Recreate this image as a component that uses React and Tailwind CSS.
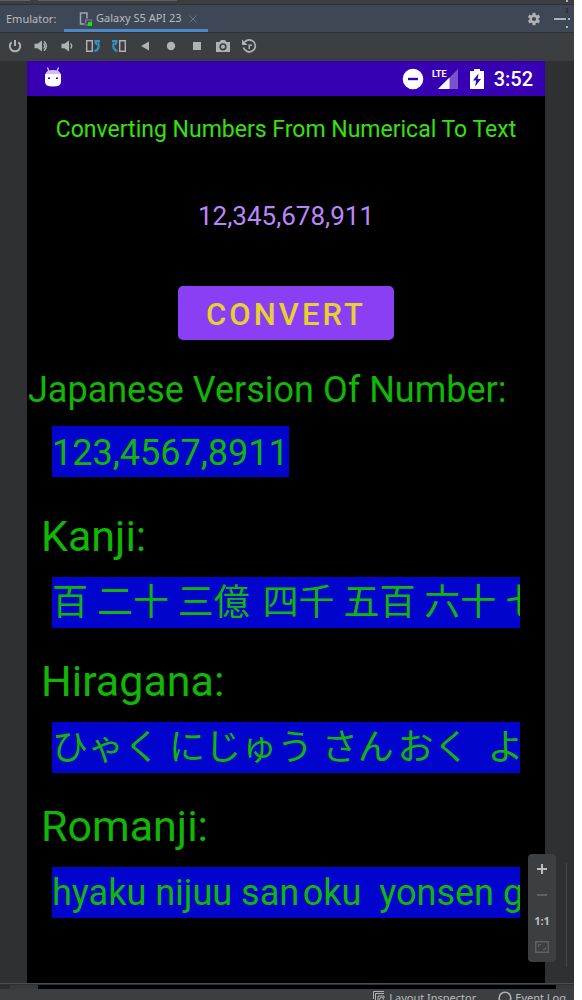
import React from "react";

const ROBOTO = "font-['Roboto','Noto_Sans_CJK_JP',sans-serif]";

function ToolButton({ label, children }) {
  return (
    <button type="button" aria-label={label} className="flex h-[26px] w-[26px] items-center justify-center text-[#afb1b3]">
      <svg width="16" height="16" viewBox="0 0 16 16" fill="currentColor" aria-hidden="true">
        {children}
      </svg>
    </button>
  );
}

function TabBar() {
  return (
    <header className="flex h-[27px] items-stretch bg-[#3d4756] font-['Noto_Sans','Open_Sans',sans-serif] text-[11px] text-[#bbbbbb]">
      <span className="flex w-16 items-center pt-px pl-[6px]">Emulator:</span>
      <div className="flex w-36 items-center border-b-[3px] border-[#4a88c7] pl-[15px] pt-[3px]">
        <svg width="14" height="16" viewBox="0 0 14 16" className="mr-[3px] shrink-0" aria-hidden="true">
          <path d="M5.500 13H1.500V2h6.500V7.500" fill="none" stroke="#9aa7b0" strokeWidth="1.500" />
          <path d="M6.700 12.500V9h5.600v2M6 14h3" fill="none" stroke="#9a6fc0" strokeWidth="1.200" />
          <rect x="9" y="11" width="4" height="4" fill="#00f000" />
        </svg>
        <span className="whitespace-nowrap">Galaxy S5 API 23</span>
        <button type="button" aria-label="Close tab" className="ml-[7px] shrink-0">
          <svg width="8" height="8" viewBox="0 0 8 8" stroke="#687380" aria-hidden="true">
            <path d="M.5.5l7 7M7.5.5l-7 7" />
          </svg>
        </button>
      </div>
      <div className="ml-auto flex items-center pr-1">
        <button type="button" aria-label="Settings" className="mr-[13px]">
          <svg width="14" height="14" viewBox="0 0 14 14" aria-hidden="true">
            <g fill="#afb1b3">
              <circle cx="7" cy="7" r="4.6" />
              <rect x="5.5" y=".8" width="3" height="12.4" />
              <rect x="5.5" y=".8" width="3" height="12.4" transform="rotate(60 7 7)" />
              <rect x="5.5" y=".8" width="3" height="12.4" transform="rotate(120 7 7)" />
            </g>
            <circle cx="7" cy="7" r="2.1" fill="#3d4756" />
          </svg>
        </button>
        <button type="button" aria-label="Hide panel">
          <svg width="16" height="22" viewBox="0 0 16 22" fill="#afb1b3" aria-hidden="true">
            <path d="M0 10h12v2H0zM14 10h2v2h-2zM12 18h2v2h-2z" />
            <path d="M12 0h2v5h-2z" fill="#313335" />
          </svg>
        </button>
      </div>
    </header>
  );
}

function EmulatorToolbar() {
  return (
    <div role="toolbar" aria-label="Emulator controls" className="flex h-[29px] items-start border-t border-[#2f3133] bg-[#3c3f41] pl-[2px]">
      <ToolButton label="Power">
        <path d="M4.6 4.2A5.2 5.2 0 1 0 11.4 4.2" fill="none" stroke="currentColor" strokeWidth="2" />
        <path d="M7 2h2v6H7z" />
      </ToolButton>
      <ToolButton label="Volume up">
        <path d="M1.500 5.800h3L9 2.500v11L4.500 10.200h-3z" />
        <path d="M10.500 5.500q2.400 2.500 0 5M11 3.200q5 4.800 0 9.600" fill="none" stroke="currentColor" strokeWidth="1.400" />
      </ToolButton>
      <ToolButton label="Volume down">
        <path d="M2.500 5.800h3L10 2.500v11L5.500 10.200h-3z" />
        <path d="M11.500 5.500q2.400 2.500 0 5" fill="none" stroke="currentColor" strokeWidth="1.400" />
      </ToolButton>
      <ToolButton label="Rotate left">
        <path d="M1.700 2.700h5.600v10.600H1.700z" fill="none" stroke="currentColor" strokeWidth="1.400" />
        <path d="M9.500 13.200c4.500-1.500 5-5 3.500-8.500" fill="none" stroke="#3592c4" strokeWidth="2.200" />
        <path d="M9.500 2h5.500v2.200H12V8L9.500 5z" fill="#3592c4" />
      </ToolButton>
      <ToolButton label="Rotate right">
        <path d="M8.700 2.700h5.600v10.600H8.700z" fill="none" stroke="currentColor" strokeWidth="1.400" />
        <path d="M6.500 13.200c-4.500-1.500-5-5-3.500-8.500" fill="none" stroke="#3592c4" strokeWidth="2.200" />
        <path d="M6.500 2H1v2.200h3V8l2.500-3z" fill="#3592c4" />
      </ToolButton>
      <ToolButton label="Back">
        <path d="M12 3.500v9L4 8z" />
      </ToolButton>
      <ToolButton label="Home">
        <circle cx="8" cy="8" r="4.200" />
      </ToolButton>
      <ToolButton label="Overview">
        <path d="M4 4h8v8H4z" />
      </ToolButton>
      <ToolButton label="Take screenshot">
        <path fillRule="evenodd" d="M1 4h3.500L6 2h4l1.500 2H15v10H1zM8 5.200a3.600 3.600 0 1 0 0 7.200 3.600 3.600 0 0 0 0-7.200z" />
        <circle cx="8" cy="8.800" r="2" />
      </ToolButton>
      <ToolButton label="Snapshots">
        <path d="M3.300 4.500A6 6 0 1 1 2.500 9.500" fill="none" stroke="currentColor" strokeWidth="1.700" />
        <path d="M1 1.500v5.500h5.500z" />
        <path d="M11 7.200H8.200V11" fill="none" stroke="currentColor" strokeWidth="1.500" />
      </ToolButton>
    </div>
  );
}

function StatusBar() {
  return (
    <div className="flex h-[35px] items-center bg-[#3700b3] pr-3 pl-[17px] text-white">
      <svg width="18" height="22" viewBox="0 0 18 22" className="mb-[3px]" fill="#fff" aria-hidden="true">
        <path d="M3.500 1.500l1.500 4M14.500 1.500l-1.500 4" stroke="#d9ccf2" strokeWidth="1.300" />
        <path d="M1.500 8Q2 4 9 4t7.500 4z" fill="#cfc0ef" />
        <path d="M1 8h16v8q0 4.500-8 4.500T1 16z" />
        <path d="M4 11.500h2v1.500H4zM12 11.500h2v1.500h-2z" fill="#3700b3" />
      </svg>
      <div className="ml-auto flex items-center">
        <svg width="22" height="22" viewBox="0 0 22 22" aria-hidden="true">
          <circle cx="11" cy="11" r="10.300" fill="#fff" />
          <path d="M6 9.800h10v2.400H6z" fill="#3700b3" />
        </svg>
        <svg width="28" height="22" viewBox="0 0 28 22" className="ml-2" aria-label="LTE signal">
          <path d="M26 1v20H6z" fill="#7a52cc" />
          <path d="M17.500 9.500V21H6z" fill="#fff" />
          <text x="0" y="9" fontSize="9" fontWeight="700" fill="#fff">LTE</text>
        </svg>
        <svg width="14" height="22" viewBox="0 0 14 22" className="ml-[10px]" aria-hidden="true">
          <path d="M4 1h6v2h4v18H0V3h4z" fill="#fff" />
          <path d="M8.500 5.500L3 12.500h3.200L5 18.500l6-7.500H7.600z" fill="#3700b3" />
        </svg>
        <span className="ml-[10px] text-xl leading-6 font-medium">3:52</span>
      </div>
    </div>
  );
}

function Result({ label, children }) {
  return (
    <section className="mb-7">
      <h2 className="mb-4 pl-[14px] text-[43px] leading-[50px]">{label}</h2>
      <p className="mx-[25px] h-[51px] overflow-hidden bg-[#0004cc] pt-px text-4xl leading-[50px] whitespace-pre">{children}</p>
    </section>
  );
}

function ConverterScreen() {
  return (
    <main className={`${ROBOTO} flex flex-1 flex-col overflow-hidden bg-black text-[#12b606]`}>
      <StatusBar />
      <h1 className="mt-5 text-center text-[23px] leading-7 whitespace-nowrap text-[#38e010]">
        Converting Numbers From Numerical To Text
      </h1>
      <input
        type="text"
        aria-label="Number to convert"
        defaultValue="12,345,678,911"
        className="mt-14 h-8 w-full bg-transparent text-center text-[26px] leading-8 text-[#bb86fc] outline-none"
      />
      <button
        type="button"
        className="mt-[54px] h-[54px] w-[216px] self-center rounded-[5px] bg-[#8a3ff5] pt-1 text-[31px] leading-9 font-medium tracking-widest text-[#e8d12c]"
      >
        CONVERT
      </button>
      <section className="mt-[29px] mb-[34px]">
        <h2 className="mb-[15px] pl-px text-4xl leading-[42px] whitespace-nowrap">Japanese Version Of Number:</h2>
        <p className="ml-[25px] h-[51px] w-fit bg-[#0004cc] pt-[2px] text-4xl leading-[50px]">123,4567,8911</p>
      </section>
      <Result label="Kanji:">{"百 二十 三億 \u200A四千 五百 六十 七万 八千 九百 十一"}</Result>
      <Result label="Hiragana:">{"ひゃく にじゅう さん\u200Aおく  よんせん ごひゃく"}</Result>
      <Result label="Romanji:">{"hyaku nijuu san\u200Aoku  yonsen gohyaku"}</Result>
    </main>
  );
}

function ZoomControls() {
  return (
    <div className="absolute right-[18px] bottom-[21px] flex w-7 flex-col items-center rounded bg-[#3c3f41] py-[2px] font-['Open_Sans',sans-serif] text-[#bbbdbf]">
      <button type="button" aria-label="Zoom in" className="flex h-[26px] w-7 items-center justify-center">
        <svg width="10" height="10" viewBox="0 0 10 10" fill="currentColor" aria-hidden="true"><path d="M4 0h2v4h4v2H6v4H4V6H0V4h4z" /></svg>
      </button>
      <button type="button" aria-label="Zoom out" className="flex h-[26px] w-7 items-center justify-center">
        <svg width="10" height="2" viewBox="0 0 10 2" fill="#5f6162" aria-hidden="true"><path d="M0 0h10v2H0z" /></svg>
      </button>
      <button type="button" className="h-[26px] w-7 text-[11px] leading-[26px] font-bold">1:1</button>
      <button type="button" aria-label="Zoom to fit" className="flex h-[26px] w-7 items-center justify-center">
        <svg width="14" height="12" viewBox="0 0 14 12" fill="none" stroke="#5f6162" aria-hidden="true">
          <path d="M.700.700h12.600v10.600H.700z" strokeWidth="1.400" />
          <path d="M3.500 6V3.500H6M10.500 6v2.500H8" />
        </svg>
      </button>
    </div>
  );
}

function Footer() {
  return (
    <footer className="flex h-[11px] items-start justify-end gap-[22px] overflow-hidden bg-[#3c3f41] pr-[8px] font-['Noto_Sans','Open_Sans',sans-serif] text-[11px] leading-4 text-[#bbbbbb]">
      <a href="#layout-inspector" className="flex gap-1 pt-px">
        <svg width="12" height="12" viewBox="0 0 12 12" className="mt-px" fill="none" stroke="#afb1b3" aria-hidden="true">
          <path d="M.500 8V.500H11M2.500 10V2.500H11M5 11.500V5h6v2" />
          <circle cx="8.500" cy="8.500" r="2" />
        </svg>
        <span>Layout Inspector</span>
      </a>
      <a href="#event-log" className="flex gap-[3px] pt-px">
        <svg width="14" height="14" viewBox="0 0 14 14" className="mt-px" fill="none" stroke="#afb1b3" aria-hidden="true">
          <circle cx="7" cy="7" r="5.800" strokeWidth="1.600" />
        </svg>
        <span>Event Log</span>
      </a>
    </footer>
  );
}

export default function App() {
  return (
    <div className="flex min-h-screen flex-col bg-white pr-2">
      <div className="flex h-1 items-start gap-2 bg-[#3c3f41]">
        <span className="h-px w-[30px] bg-[#5e6060]" />
        <span className="h-px w-[139px] bg-[#5e6060]" />
        <span className="mr-[6px] ml-auto h-[2px] w-[2px] bg-[#afb1b3]" />
      </div>
      <div className="h-px bg-[#2f3133]" />
      <TabBar />
      <EmulatorToolbar />
      <div className="relative flex flex-1 bg-[#2f3032] pr-[29px] pl-[27px]">
        <ConverterScreen />
        <ZoomControls />
        <div className="absolute right-[7px] bottom-4 h-[104px] w-px bg-[#48494b]" />
      </div>
      <div className="h-[2px] border-t border-[#4a4c4e] bg-[#2f3032]" />
      <div className="flex h-1 justify-between bg-black">
        <span className="w-[38px] border-l-[10px] border-[#2d2d2c] bg-[#37393b]" />
        <span className="w-[18px] bg-[#37393b]" />
      </div>
      <Footer />
    </div>
  );
}
